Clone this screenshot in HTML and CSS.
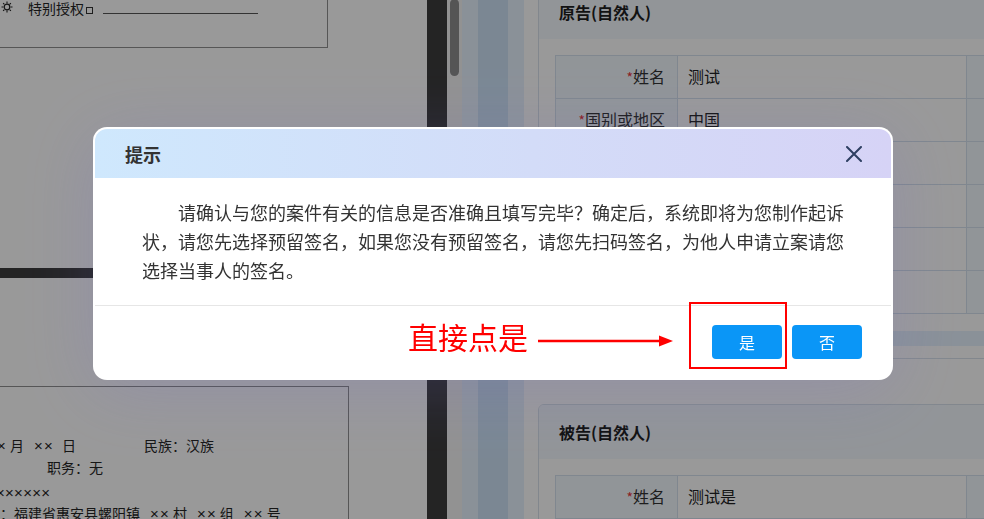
FILE: index.html
```html
<!DOCTYPE html>
<html lang="zh-CN">
<head>
<meta charset="utf-8">
<title>提示</title>
<link rel="stylesheet" href="styles.css">
</head>
<body>
<div class="app">
  <div class="viewer">
    <div class="pages">
      <div class="page page1">
        <div class="box box1">
          <div class="auth-row"><svg class="sun" width="12" height="12" viewBox="0 0 12 12"><circle cx="6" cy="6" r="2.8" fill="none" stroke="#222" stroke-width="1.2"/><path d="M6 0.5V2.4M6 9.6V11.5M0.5 6H2.4M9.6 6H11.5M2.1 2.1L3.4 3.4M8.6 8.6L9.9 9.9M9.9 2.1L8.6 3.4M3.4 8.6L2.1 9.9" stroke="#222" stroke-width="1.1"/></svg><span class="auth">特别授权</span><span class="sq"></span><span class="blank"></span></div>
        </div>
      </div>
      <div class="page page2">
        <div class="box box2">
          <div class="dline"><span class="t1"><span class="x x0">×</span>月<span class="x x1">××</span>日</span><span>民族：汉族</span></div>
          <div class="dline l2">职务：无</div>
          <div class="dline l3"><span class="x x3">××××××</span></div>
          <div class="dline l4">：福建省惠安县螺阳镇<span class="x xa">××</span>村<span class="x xa">××</span>组<span class="x xa">××</span>号</div>
        </div>
      </div>
    </div>
    <div class="vgap"></div>
    <div class="vscroll"><div class="thumb"></div></div>
  </div>
  <div class="side">
    <div class="strip s-light"></div>
    <div class="strip s-mid"></div>
    <div class="strip s-light"></div>
    <div class="main">
      <section class="card card1">
        <div class="card-head">原告(自然人)</div>
        <div class="card-body">
          <table class="form">
            <tr><td class="lab"><span class="req">*</span>姓名</td><td class="val">测试</td><td class="lab2"></td></tr>
            <tr><td class="lab"><span class="req">*</span>国别或地区</td><td class="val">中国</td><td class="lab2"></td></tr>
            <tr><td class="lab"></td><td class="val"></td><td class="lab2"></td></tr>
            <tr><td class="lab"></td><td class="val"></td><td class="lab2"></td></tr>
            <tr><td class="lab"></td><td class="val"></td><td class="lab2"></td></tr>
            <tr><td class="lab"></td><td class="val"></td><td class="lab2"></td></tr>
          </table>
          <div class="hband"></div>
        </div>
      </section>
      <section class="card card2">
        <div class="card-head">被告(自然人)</div>
        <div class="card-body">
          <table class="form">
            <tr><td class="lab"><span class="req">*</span>姓名</td><td class="val">测试是</td><td class="lab2"></td></tr>
            <tr><td class="lab"></td><td class="val"></td><td class="lab2"></td></tr>
          </table>
        </div>
      </section>
    </div>
  </div>
</div>

<div class="mask"></div>

<div class="dialog">
  <div class="dlg-head">
    <span class="dlg-title">提示</span>
    <svg class="close" width="16" height="16" viewBox="0 0 16 16"><path d="M1 1 L15 15 M15 1 L1 15" stroke="#2e3f62" stroke-width="2" fill="none" stroke-linecap="round"/></svg>
  </div>
  <div class="dlg-body">
    <p>请确认与您的案件有关的信息是否准确且填写完毕？确定后，系统即将为您制作起诉状，请您先选择预留签名，如果您没有预留签名，请您先扫码签名，为他人申请立案请您选择当事人的签名。</p>
  </div>
  <div class="dlg-foot">
    <button class="btn">是</button>
    <button class="btn">否</button>
  </div>
</div>

<div class="note">直接点是</div>
<svg class="arrow" width="138" height="16" viewBox="0 0 138 16"><line x1="0" y1="8" x2="123" y2="8" stroke="#ff0000" stroke-width="2.5"/><polygon points="121,2.5 135,8 121,13.5" fill="#ff0000"/></svg>
<div class="hl"></div>
</body>
</html>
```

FILE: styles.css
```css
* { box-sizing: border-box; }
html, body {
  margin: 0;
  padding: 0;
  width: 984px;
  height: 519px;
  overflow: hidden;
  font-family: "Noto Sans CJK SC", "Noto Sans", sans-serif;
  color: #333;
}
.app {
  display: flex;
  width: 984px;
  height: 519px;
}

/* document viewer */
.viewer {
  display: flex;
  width: 462px;
  height: 519px;
  background: #3c3c3c;
  flex: none;
}
.pages {
  width: 427px;
  display: flex;
  flex-direction: column;
  gap: 10px;
  overflow: hidden;
}
.page {
  background: #fff;
  overflow: hidden;
}
.page1 { height: 268px; flex: none; }
.page2 { flex: 1; }
.box {
  border: 1px solid #8f8f8f;
  margin-left: -2px;
  font-family: "Noto Sans CJK SC", sans-serif;
  font-size: 14px;
  color: #252525;
}
.box1 {
  margin-top: -41px;
  width: 330px;
  height: 89px;
  padding: 38px 0 0 2px;
}
.auth-row {
  display: flex;
  align-items: center;
  height: 20px;
  line-height: 20px;
}
.sun { display: block; flex: none; margin-top: -2px; }
.auth { margin-left: 15px; }
.sq {
  width: 7px;
  height: 7px;
  border: 1px solid #333;
  margin: 5px 0 0 2px;
}
.blank {
  width: 155px;
  height: 16px;
  border-bottom: 1px solid #555;
  margin: 0 0 0 10px;
  align-self: flex-start;
}
.box2 {
  margin-top: 108px;
  width: 351px;
  height: 400px;
  padding: 47px 0 0 0;
}
.dline {
  height: 22px;
  line-height: 22px;
  white-space: pre;
}
.x {
  font-family: "Liberation Sans", sans-serif;
  font-size: 15px;
  letter-spacing: 1.2px;
}
.x0 { margin-left: -2px; margin-right: 3px; }
.x1 { margin-left: 10px; margin-right: 8px; }
.x3 { margin-left: -3px; letter-spacing: 0.3px; }
.xa { margin-left: 10px; margin-right: 3px; }
.t1 { display: inline-block; width: 145px; }
.l2 { padding-left: 48px; }
.l3 { margin-top: 3px; }
.l4 { margin-top: -1px; padding-left: 1px; }
.vgap { width: 20px; flex: none; }
.vscroll {
  width: 15px;
  flex: none;
  background: #f3f3f3;
}
.thumb {
  width: 9px;
  height: 77px;
  margin: -1px 0 0 3px;
  border-radius: 5px;
  background: #8e8e8e;
}

/* right side */
.side {
  flex: 1;
  display: flex;
  min-width: 0;
}
.strip { flex: none; height: 100%; }
.s-light { width: 16px; background: #e7f2fe; }
.s-mid { width: 30px; background: #cde2f6; }
.main {
  flex: 1;
  min-width: 0;
  background: #fff;
  padding-left: 14px;
  overflow: hidden;
}
.card {
  border: 1px solid #d9e2ec;
  border-radius: 6px;
  background: #fff;
  width: 520px;
  overflow: hidden;
}
.card1 { margin-top: -16px; }
.card2 { margin-top: 45px; }
.card-head {
  height: 54px;
  padding: 2px 0 0 20px;
  line-height: 50px;
  background: #f3f8fd;
  font-size: 16px;
  font-weight: 700;
  color: #1e1e1e;
}
.card-body {
  padding: 16px 0 12px 16px;
}
.form {
  border-collapse: collapse;
  table-layout: fixed;
  width: 620px;
  font-size: 16px;
}
.form td {
  height: 43px;
  border: 1px solid #d5e1ee;
  padding: 0 0 2px 0;
}
.lab {
  width: 122px;
  background: #f2f8fd;
  text-align: right;
  padding-right: 12px !important;
  color: #333;
}
.val {
  width: 289px;
  padding-left: 10px !important;
  color: #222;
}
.lab2 {
  width: 209px;
  background: #f2f8fd;
}
.req { color: #e8343a; font-size: 14px; }
.hband {
  margin-top: 17px;
  height: 15px;
  background: #e6f2fe;
}

/* modal */
.mask {
  position: fixed;
  inset: 0;
  background: rgba(0, 0, 0, 0.4);
}
.dialog {
  position: fixed;
  left: 93px;
  top: 127px;
  width: 800px;
  height: 253px;
  padding: 2px;
  border-radius: 14px;
  background: #fff;
  display: flex;
  flex-direction: column;
  box-shadow: 0 10px 70px rgba(120, 110, 210, 0.22);
}
.dlg-head {
  height: 49px;
  flex: none;
  display: flex;
  align-items: center;
  justify-content: space-between;
  padding: 0 29px 0 30px;
  border-radius: 12px 12px 0 0;
  background: linear-gradient(90deg, #cfe8fd 0%, #d3dcf8 55%, #d6d3f6 100%);
}
.dlg-title {
  font-size: 18px;
  font-weight: 700;
  color: #333;
}
.close { display: block; }
.dlg-body {
  height: 127px;
  flex: none;
  padding: 20px 45px 0 47px;
}
.dlg-body p {
  margin: 0;
  font-size: 18px;
  line-height: 28.8px;
  text-indent: 2em;
  color: #333;
}
.dlg-foot {
  flex: 1;
  border-top: 1px solid #e6e6e6;
  display: flex;
  align-items: center;
  justify-content: flex-end;
  gap: 10px;
  padding-right: 29px;
}
.btn {
  width: 70px;
  height: 34px;
  border: none;
  border-radius: 4px;
  background: #0a96f7;
  color: #fff;
  font-family: "Noto Sans CJK SC", sans-serif;
  font-size: 16px;
  padding: 0;
}

/* annotations */
.note {
  position: fixed;
  left: 408px;
  top: 321px;
  font-size: 30px;
  line-height: 1;
  color: #ff0000;
  white-space: nowrap;
}
.arrow {
  position: fixed;
  left: 538px;
  top: 333px;
}
.hl {
  position: fixed;
  left: 689px;
  top: 302px;
  width: 98px;
  height: 67px;
  border: 2px solid #ff0000;
}
```
